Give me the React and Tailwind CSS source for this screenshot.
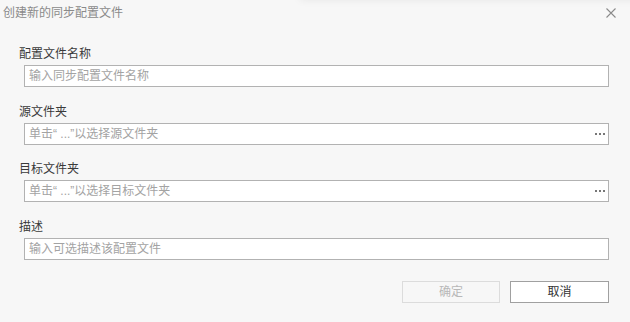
import React from "react";

const font = { fontFamily: "'Liberation Sans', 'Noto Sans CJK SC', sans-serif" };

function Dots() {
  return (
    <div className="flex items-center gap-[2px]">
      <span className="block w-[2px] h-[2px] bg-[#777]" />
      <span className="block w-[2px] h-[2px] bg-[#777]" />
      <span className="block w-[2px] h-[2px] bg-[#777]" />
    </div>
  );
}

function Field({ label, placeholder, dots, className = "" }) {
  return (
    <div className={"flex flex-col " + className}>
      <div className="h-[16px] leading-[16px] text-[12px] text-[#3a3a3a]">{label}</div>
      <div className="ml-[5px] mt-[3px] h-[22px] border border-[#b2b2b2] bg-white flex items-center justify-between pl-[4px] pr-[3px]">
        <span className="text-[12px] leading-[16px] text-[#a3a3a3]">{placeholder}</span>
        {dots && <Dots />}
      </div>
    </div>
  );
}

export default function App() {
  return (
    <div className="relative w-[630px] h-[322px] bg-[#f7f7f7] overflow-hidden" style={font}>
      <div className="absolute top-[-12px] left-[300px] right-[-20px] h-[12px] bg-[#f7f7f7] shadow-[0_0_8px_rgba(0,0,0,0.07)]" />
      <div className="relative flex items-start justify-between h-[46px]">
        <div className="pl-[3px] pt-[5px] text-[12px] leading-[16px] text-[#8a8a8a]">创建新的同步配置文件</div>
        <svg className="mt-[8px] mr-[14px]" width="10" height="10" viewBox="0 0 10 10">
          <path d="M0.5 0.5 L9.5 9.5 M9.5 0.5 L0.5 9.5" stroke="#8a8a8a" strokeWidth="1.1" fill="none" />
        </svg>
      </div>
      <div className="relative flex flex-col pl-[19px] pr-[21px]">
        <Field label="配置文件名称" placeholder="输入同步配置文件名称" />
        <Field className="mt-[17px]" label="源文件夹" placeholder="单击“ ...”以选择源文件夹" dots />
        <Field className="mt-[16px]" label="目标文件夹" placeholder="单击“ ...”以选择目标文件夹" dots />
        <Field className="mt-[17px]" label="描述" placeholder="输入可选描述该配置文件" />
        <div className="flex justify-end gap-[10px] mt-[21px]">
          <div className="w-[98px] h-[22px] border border-[#dcdcdc] bg-[#f7f7f7] flex items-center justify-center text-[12px] text-[#b8b8b8]">确定</div>
          <div className="w-[99px] h-[22px] border border-[#a0a0a0] bg-white flex items-center justify-center text-[12px] text-[#333]">取消</div>
        </div>
      </div>
    </div>
  );
}
